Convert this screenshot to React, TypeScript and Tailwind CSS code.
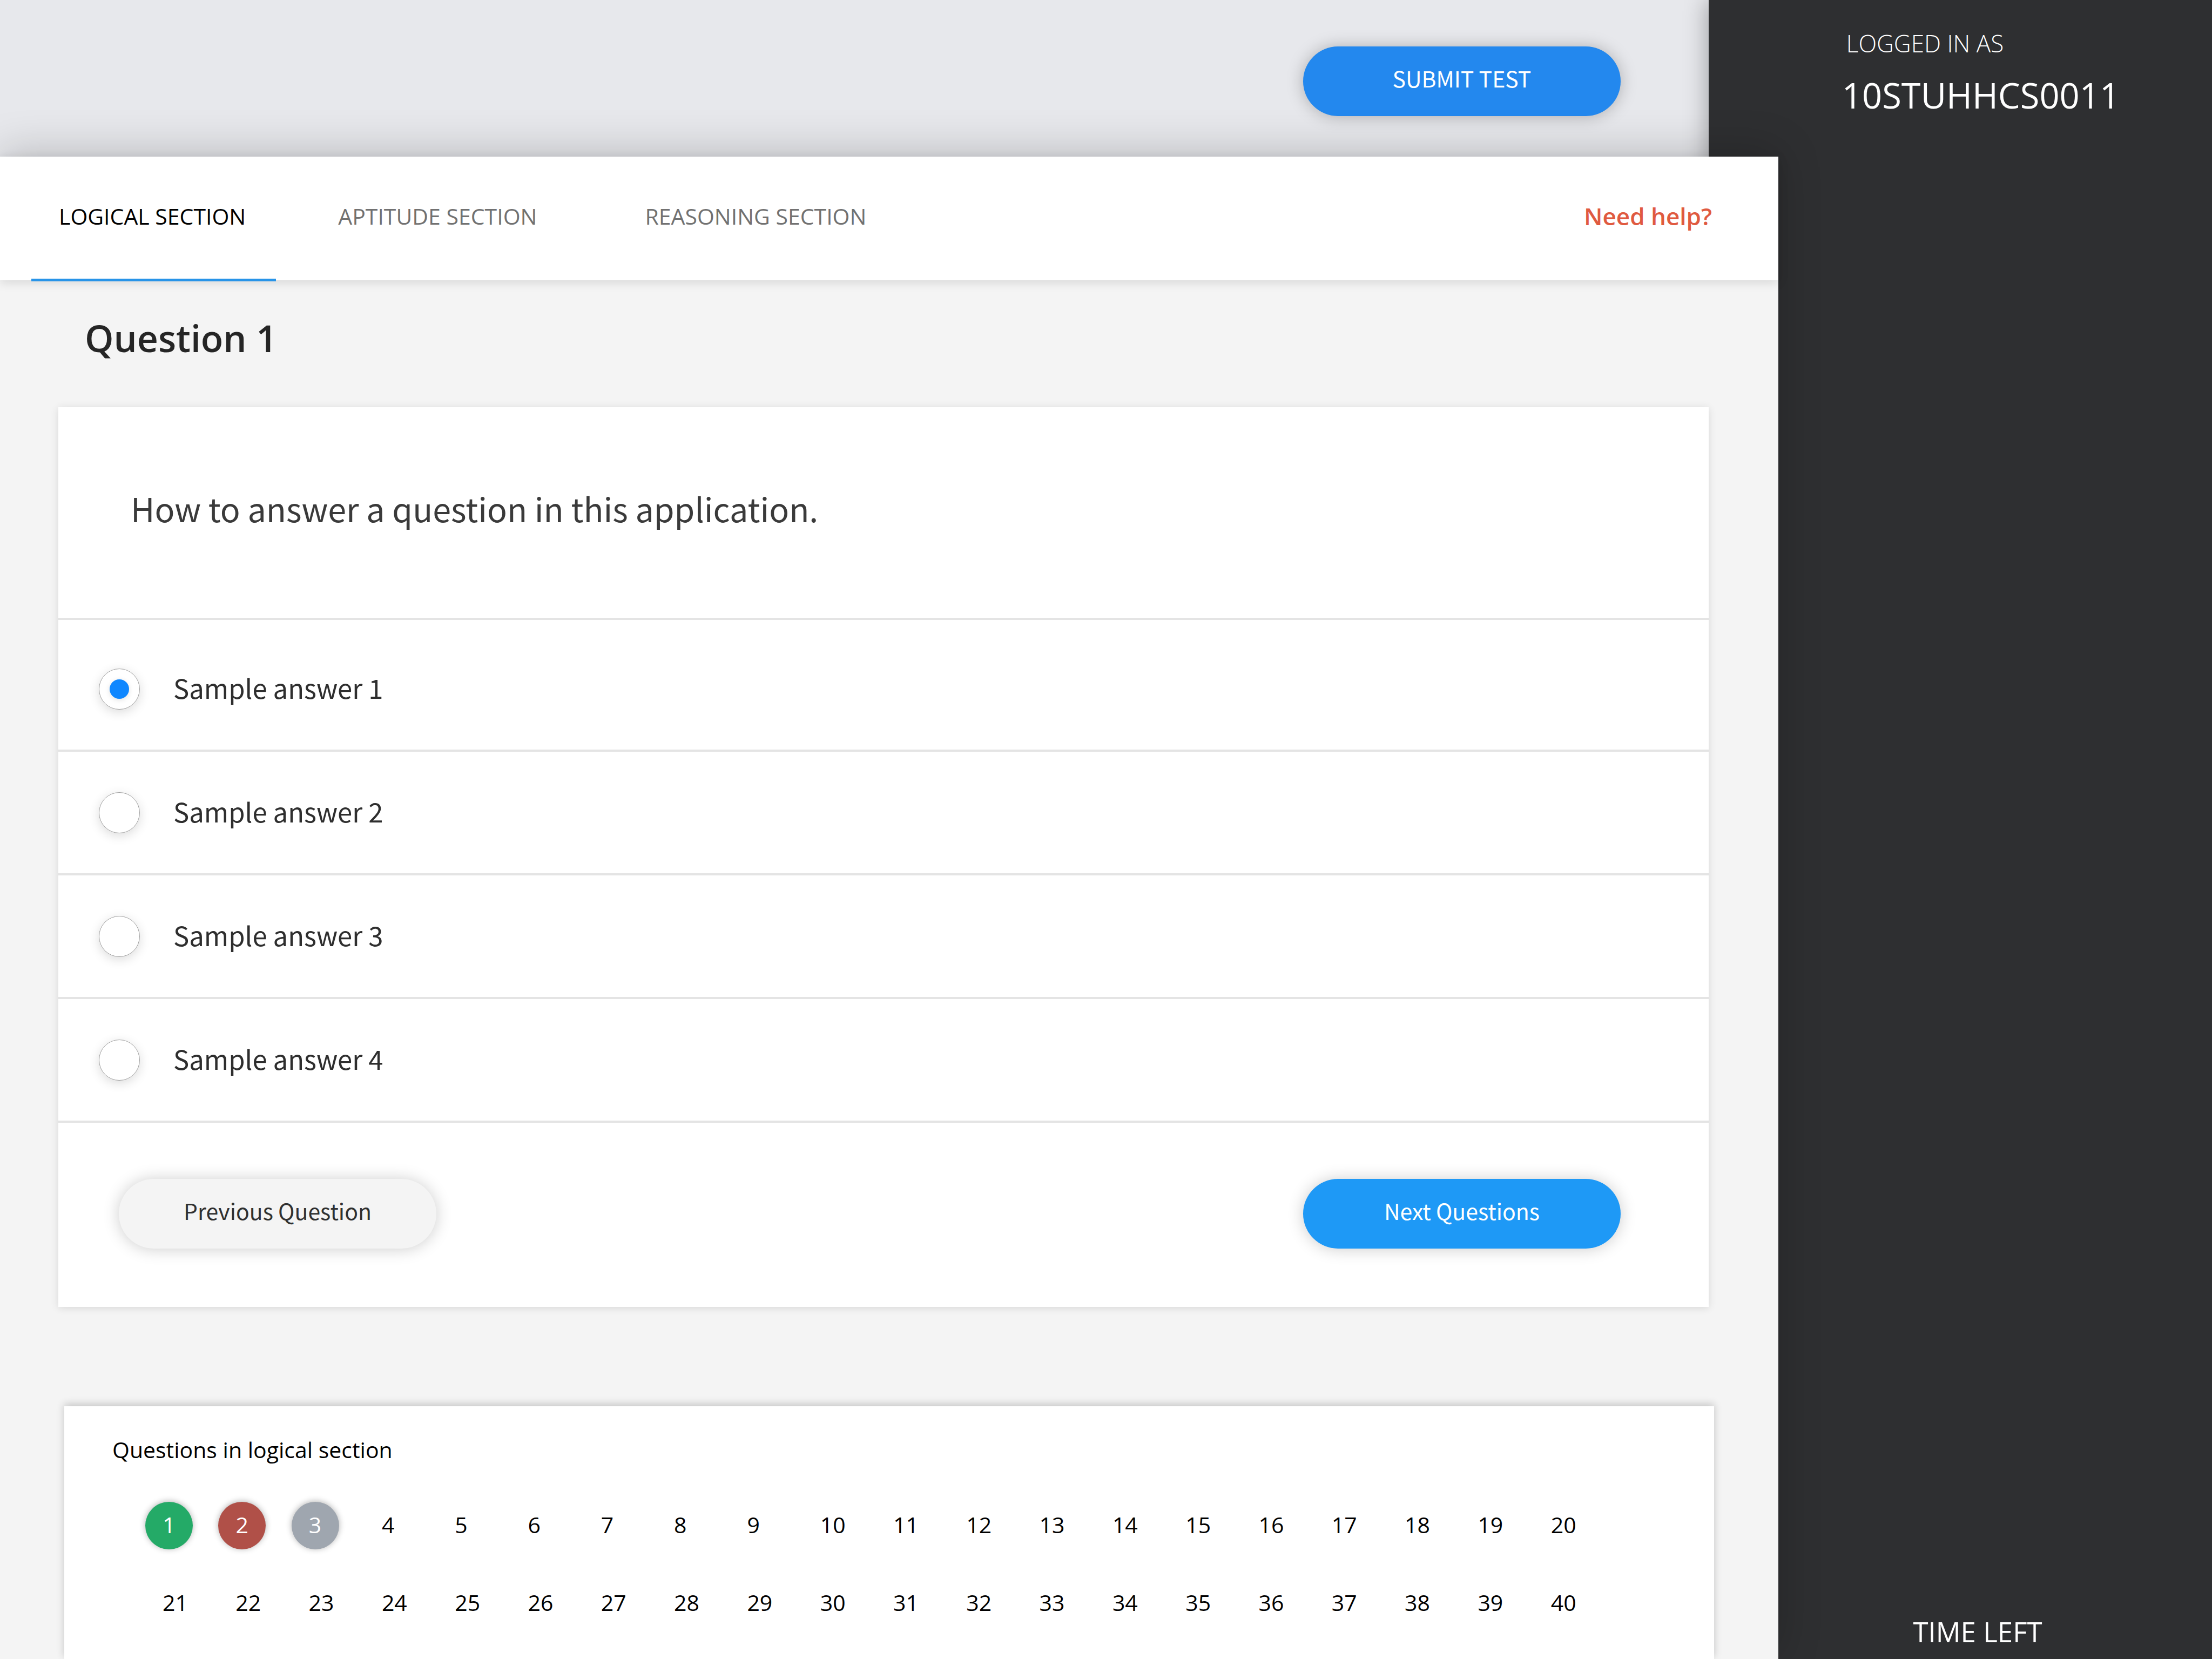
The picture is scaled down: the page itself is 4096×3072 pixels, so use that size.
import { useState } from "react";

const sans = "font-['Open_Sans',sans-serif]";
const source = "font-['Noto_Sans_CJK_SC',sans-serif]";

const tabs = [
  { label: "LOGICAL SECTION", spacing: "ml-[58px]" },
  { label: "APTITUDE SECTION", spacing: "ml-[64px]" },
  { label: "REASONING SECTION", spacing: "ml-[93px]" },
];

const answers = ["Sample answer 1", "Sample answer 2", "Sample answer 3", "Sample answer 4"];

const marks: Record<number, string> = {
  1: "bg-[#24aa67]",
  2: "bg-[#b05048]",
  3: "bg-[#9fa6af]",
};

const pill =
  "h-[129px] w-[588px] rounded-full pb-[12px] text-center text-[41px] leading-none font-['Noto_Sans_CJK_SC',sans-serif]";

function Tabs() {
  const [active, setActive] = useState(0);
  return (
    <div className="relative flex h-[229px] justify-between bg-white shadow-[0_4px_18px_rgba(0,0,0,0.12)]">
      <nav className="flex h-[231px]">
        {tabs.map((tab, i) => (
          <button
            key={tab.label}
            type="button"
            onClick={() => setActive(i)}
            className={`${tab.spacing} border-b-[5px] pr-[56px] pb-[5px] pl-[51px] text-[41px] whitespace-nowrap ${
              i === active ? "border-[#2894e8] text-black" : "border-transparent text-[#717171]"
            }`}
          >
            {tab.label}
          </button>
        ))}
      </nav>
      <a
        href="#help"
        className="flex items-center pr-[123px] pb-[10px] text-[44px] font-semibold text-[#e05a40]"
      >
        Need help?
      </a>
    </div>
  );
}

function QuestionCard() {
  const [chosen, setChosen] = useState(0);
  return (
    <section className={`${source} mr-[129px] ml-[108px] bg-white shadow-[0_2px_14px_rgba(0,0,0,0.12)]`}>
      <p className="border-b-4 border-[#e4e4e4] pt-[143px] pb-[159px] pl-[134px] text-[61px] leading-[88px] text-[#3a3a3a]">
        How to answer a question in this application.
      </p>
      <div className="pt-[15px]">
        {answers.map((answer, i) => (
          <label
            key={answer}
            className="flex h-[229px] items-center gap-[62px] border-b-4 border-[#e4e4e4] pl-[75px]"
          >
            <input
              type="radio"
              name="answer"
              checked={chosen === i}
              onChange={() => setChosen(i)}
              className="grid size-[76px] appearance-none place-items-center rounded-full border border-[#a0a0a0] bg-white shadow-[0_5px_20px_rgba(0,0,0,0.14)] before:size-9 before:rounded-full before:content-[''] checked:before:bg-[#0f87ff] checked:before:shadow-[0_2px_10px_rgba(0,0,0,0.12)]"
            />
            <span className="pb-[6px] text-[49px] leading-[72px] text-[#2e2e2e]">{answer}</span>
          </label>
        ))}
      </div>
      <div className="flex justify-between pt-[104px] pr-[163px] pb-[108px] pl-[112px]">
        <button
          type="button"
          className={`${pill} bg-[#f4f4f4] text-[#303030] shadow-[0_1px_30px_rgba(0,0,0,0.2)]`}
        >
          Previous Question
        </button>
        <button
          type="button"
          className={`${pill} bg-[#1e99f6] text-white shadow-[0_1px_30px_rgba(0,0,0,0.2)]`}
        >
          Next Questions
        </button>
      </div>
    </section>
  );
}

function QuestionMap() {
  const numbers = Array.from({ length: 40 }, (_, i) => i + 1);
  return (
    <section className="mx-[119px] mt-[184px] flex-1 bg-white pt-[52px] text-[41px] leading-[56px] text-black shadow-[0_-4px_14px_rgba(0,0,0,0.2)]">
      <h2 className="pl-[89px]">Questions in logical section</h2>
      <div className="mt-[69px] mr-[167px] ml-[182px] grid grid-cols-20 gap-y-[56px]">
        {numbers.map((n) => (
          <button
            key={n}
            type="button"
            className={`h-[88px] pb-[5px] ${
              marks[n]
                ? `${marks[n]} -ml-[32px] w-[88px] rounded-full text-center text-white shadow-[0_-1px_12px_rgba(0,0,0,0.3)]`
                : "text-left"
            }`}
          >
            {n}
          </button>
        ))}
      </div>
    </section>
  );
}

export default function App() {
  return (
    <div className={`${sans} flex min-h-screen overflow-hidden bg-[#e7e8ec]`}>
      <div className="flex flex-1 flex-col">
        <header className="flex h-[290px] justify-end pt-[86px] pr-[163px]">
          <button
            type="button"
            className={`${pill} bg-[#2388ee] text-white shadow-[0_1px_30px_rgba(0,0,0,0.25)]`}
          >
            SUBMIT TEST
          </button>
        </header>
        <main className="relative z-10 -mr-[129px] flex flex-1 flex-col bg-[#f4f4f4] shadow-[0_-8px_76px_rgba(0,0,0,0.2)]">
          <Tabs />
          <h1 className="mt-[61px] mb-[82px] ml-[157px] text-[68px] leading-[92px] font-semibold text-[#252525]">
            Question 1
          </h1>
          <QuestionCard />
          <QuestionMap />
        </main>
      </div>
      <aside className="relative flex w-[932px] flex-col items-center justify-between bg-[#2e2f31] pt-[50px] pb-[17px] pl-[64px] text-white shadow-[-3px_0_40px_rgba(0,0,0,0.3)]">
        <div className="pl-3">
          <p className="pl-2 text-[44px] leading-[60px] font-light">LOGGED IN AS</p>
          <p className="mt-[22px] text-[65px] leading-[88px]">10STUHHCS0011</p>
        </div>
        <p className="text-[51px] leading-[68px]">TIME LEFT</p>
      </aside>
    </div>
  );
}
